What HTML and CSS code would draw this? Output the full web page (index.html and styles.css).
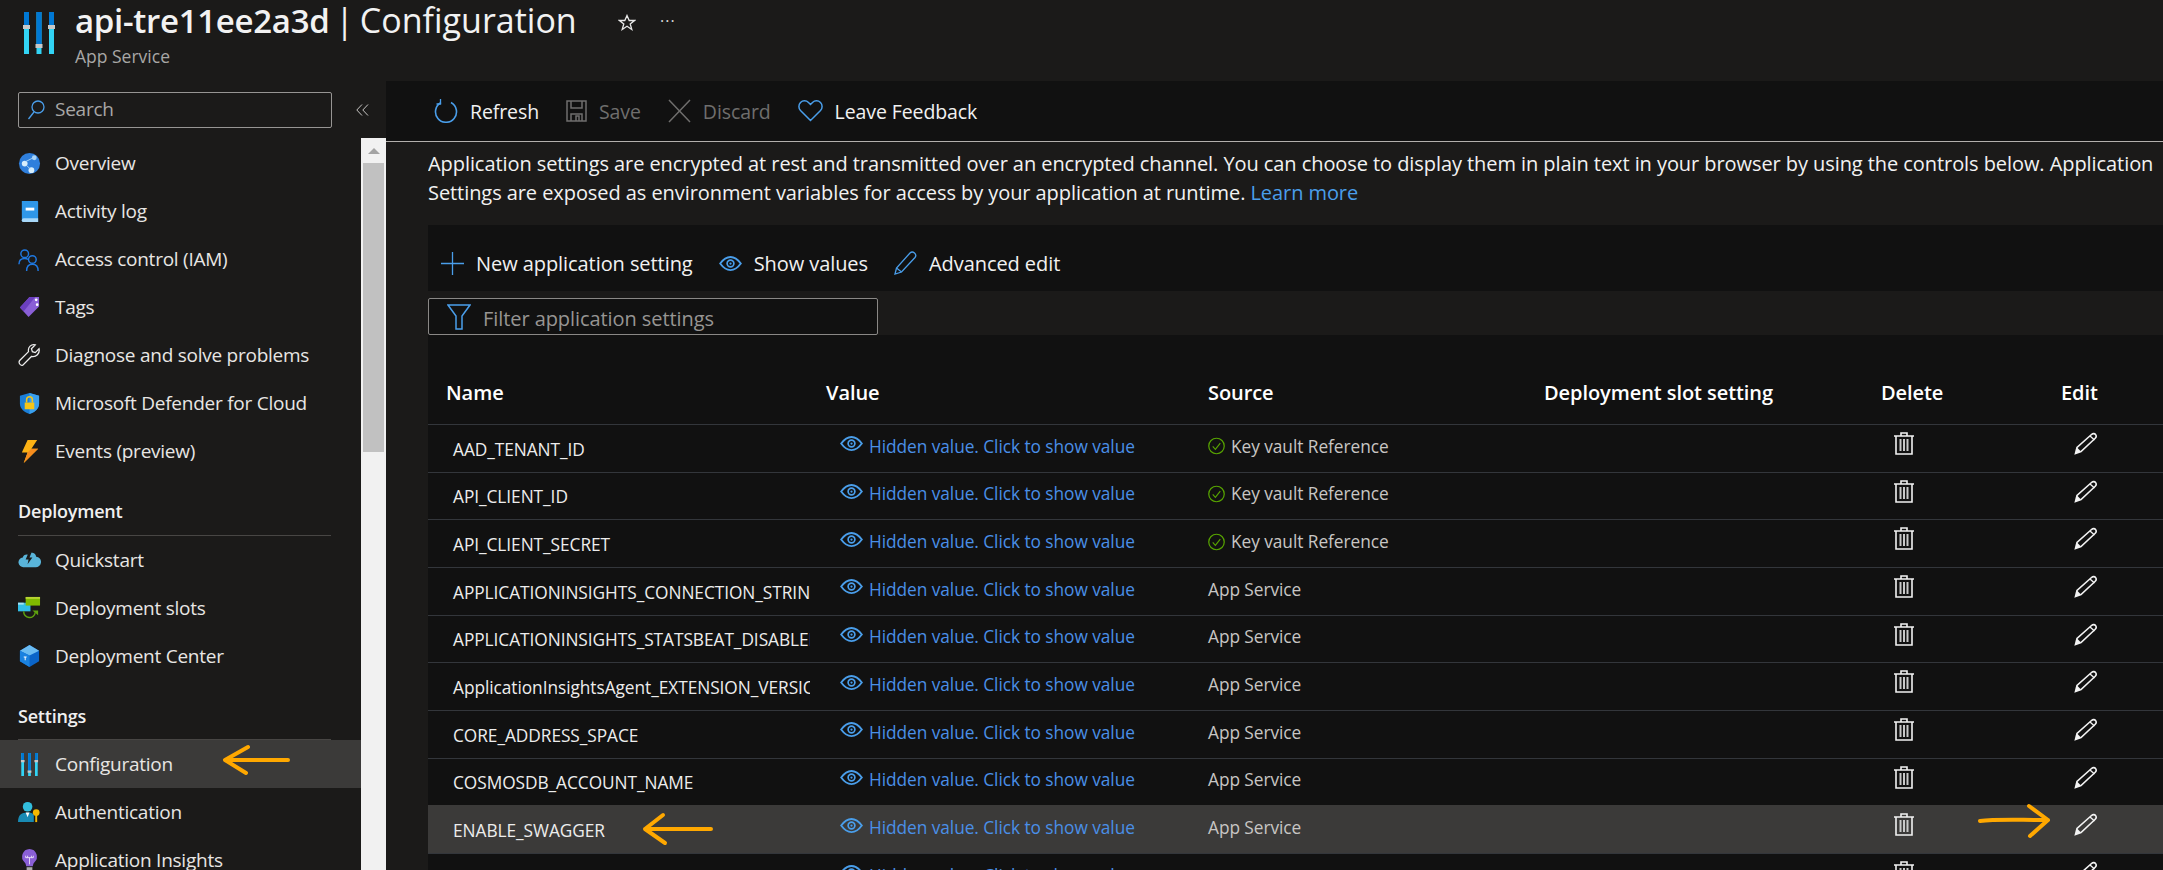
FILE: index.html
```html
<!DOCTYPE html>
<html lang="en">
<head>
<meta charset="utf-8">
<title>api-tre11ee2a3d | Configuration</title>
<link rel="stylesheet" href="styles.css">
</head>
<body>
<svg class="defs" width="0" height="0" aria-hidden="true">
  <symbol id="eye" viewBox="0 0 24 16"><path d="M1 8C5 2.500 8.500 1 12 1s7 1.500 11 7c-4 5.500-7.500 7-11 7S5 13.500 1 8z" fill="none" stroke="currentColor" stroke-width="2"/><circle cx="12" cy="8" r="3.600" fill="none" stroke="currentColor" stroke-width="1.800"/><circle cx="12" cy="8" r="1.200" fill="currentColor"/></symbol>
  <symbol id="check" viewBox="0 0 18 18"><circle cx="9" cy="9" r="8.200" fill="none" stroke="#57a300" stroke-width="1.300"/><path d="M5 9.500l2.800 3L13 6" fill="none" stroke="#57a300" stroke-width="1.200"/></symbol>
  <symbol id="trash" viewBox="0 0 20 23"><path d="M0 4h20M7 4V1h6v3M2 4v18h16V4" fill="none" stroke="#f2f2f2" stroke-width="1.600"/><path d="M6.500 7v12M10 7v12M13.500 7v12" stroke="#c8c8c8" stroke-width="2"/></symbol>
  <symbol id="pencil" viewBox="0 0 24 23"><path d="M1.500 21.500l1.500-6L17.500 2.500c1.500-1.300 3.200-1 4 0 1 1.200.8 2.800-.5 4L7 19.500z" fill="none" stroke="#f2f2f2" stroke-width="1.600"/><path d="M1.500 21.500l1.500-6 4 4z" fill="#f2f2f2"/><path d="M16 4l4.500 4" stroke="#f2f2f2" stroke-width="1.400"/></symbol>
  <symbol id="sliders" viewBox="0 0 32 42"><path d="M1 0h5v42H1zM13.500 0h5v42h-5zM26 0h5v42h-5z" fill="#32d4f5"/><path d="M1 0h5v14H1zM13.500 0h5v33h-5zM26 0h5v14h-5z" fill="#0078d4"/><path d="M0 13h7v4H0zM12.500 32h7v4h-7zM25 13h7v4h-7z" fill="#c8c8c8"/></symbol>
</svg>

<header class="top">
  <svg class="top-icon" width="32" height="42"><use href="#sliders"/></svg>
  <div class="top-titles">
    <h1 class="title"><b>api-tre11ee2a3d</b> | Configuration</h1>
    <div class="subtitle">App Service</div>
  </div>
  <svg class="star" width="18" height="18" viewBox="0 0 18 18"><path d="M9 1.500l2.200 5h5.300l-4.300 3.400 1.600 5.600L9 12.300l-4.800 3.200 1.600-5.600L1.500 6.500h5.300z" fill="none" stroke="#e8e8e8" stroke-width="1.300"/></svg>
  <span class="dots">···</span>
</header>

<div class="shell">
  <aside class="side">
    <div class="side-top">
      <div class="search">
        <svg width="18" height="22" viewBox="0 0 18 22"><circle cx="11" cy="8" r="6" fill="none" stroke="#4a9eea" stroke-width="1.300"/><path d="M7 13L1.500 20" stroke="#4a9eea" stroke-width="1.300"/></svg>
        <span>Search</span>
      </div>
      <svg class="collapse" width="13" height="12" viewBox="0 0 13 12"><path d="M6 0.500L0.800 6L6 11.500M12 0.500L6.800 6L12 11.500" fill="none" stroke="#c8c6c4" stroke-width="1"/></svg>
    </div>
    <div class="nav-wrap">
      <nav class="nav">
        <a class="item"><svg class="ico" viewBox="0 0 24 24"><circle cx="12" cy="12" r="11" fill="#2f7fdc"/><circle cx="7" cy="12" r="3" fill="#d8eefc"/><circle cx="17" cy="6" r="2.500" fill="#a9d4f7"/><circle cx="14" cy="19" r="3" fill="#d8eefc"/><path d="M8 10l8-4M9 14l4 4" stroke="#a9d4f7"/></svg>Overview</a>
        <a class="item"><svg class="ico" viewBox="0 0 24 24"><path d="M4 1h16a1 1 0 0 1 1 1v21H6a2 2 0 0 1-2-2z" fill="#2f97e8"/><path d="M4 21a2 2 0 0 1 2-2h15v4H6a2 2 0 0 1-2-2z" fill="#a8d8f8"/><path d="M8 8h9v3H8z" fill="#fff"/></svg>Activity log</a>
        <a class="item"><svg class="ico" viewBox="0 0 24 24"><circle cx="7" cy="6" r="4" fill="none" stroke="#1f78e0" stroke-width="1.500"/><path d="M1 17c0-4 2-6 6-6 1.500 0 3 .5 3.500 1" fill="none" stroke="#1f78e0" stroke-width="1.500"/><circle cx="15" cy="12" r="4" fill="none" stroke="#1f78e0" stroke-width="1.500"/><path d="M9 24c0-4 2-7 6-7s6 3 6 7" fill="none" stroke="#1f78e0" stroke-width="1.500"/></svg>Access control (IAM)</a>
        <a class="item"><svg class="ico" viewBox="0 0 24 24"><path d="M2 12L12 1h10v10L11 22z" fill="#8a5fd6"/><path d="M2 12L12 1h6L6 16z" fill="#6b3fbf"/><circle cx="19" cy="4" r="1.400" fill="#fff"/><circle cx="20" cy="9" r="1.400" fill="#fff"/></svg>Tags</a>
        <a class="item"><svg class="ico" viewBox="0 0 24 24"><path d="M22 5l-4 4-3-1-1-3 4-4c-4-1-8 2-7 7L2 17c-2 2 0 6 3 5l9-9c5 1 9-3 8-8z" fill="none" stroke="#efefef" stroke-width="1.300"/></svg>Diagnose and solve problems</a>
        <a class="item"><svg class="ico" viewBox="0 0 24 24"><path d="M12 1l10 3v8c0 6-5 9-10 11C7 21 2 18 2 12V4z" fill="#1b7fd8"/><path d="M12 1l10 3v8c0 6-5 9-10 11z" fill="#3aa0ee"/><path d="M7 11h10v7H7z" fill="#f5c518"/><path d="M9 11V8a3 3 0 0 1 6 0v3" fill="none" stroke="#f5c518" stroke-width="1.600"/></svg>Microsoft Defender for Cloud</a>
        <a class="item"><svg class="ico" viewBox="0 0 24 24"><path d="M10 0h10l-6 9h7L6 24l4-11H4z" fill="#fcb214"/><path d="M14 9h7L6 24l4-11z" fill="#f78d1e"/></svg>Events (preview)</a>
        <div class="sec">Deployment</div>
        <a class="item"><svg class="ico" viewBox="0 0 24 24"><path d="M6 20a5 5 0 0 1-1-10 4 4 0 0 1 5-3 5 5 0 0 1 9 2 5.500 5.500 0 0 1-1 11z" fill="#59b4d9"/><path d="M11 5l-3 7h3l-1 5 5-7h-3l2-5z" fill="#1b1a19"/></svg>Quickstart</a>
        <a class="item"><svg class="ico" viewBox="0 0 24 24"><path d="M0 7h13v9H0z" fill="#32bfe8"/><path d="M0 7h6v2H0z" fill="#a5e3f5"/><path d="M8 1h15v9H8z" fill="#7fba00"/><path d="M8 1h15v2H8z" fill="#b8d432"/><path d="M6 16a6 6 0 0 0 12 1" fill="none" stroke="#5ea20f" stroke-width="1.500"/><path d="M15 15h6v5z" fill="#5ea20f"/></svg>Deployment slots</a>
        <a class="item"><svg class="ico" viewBox="0 0 24 24"><path d="M12 1l10 6v11l-10 6L2 18V7z" fill="#0a64c8"/><path d="M12 1l10 6-10 5L2 7z" fill="#6bbcf2"/><path d="M2 7l10 5v12L2 18z" fill="#1a82e0"/><path d="M6 13h3v1H8v3H7v-3H6z" fill="#fff"/></svg>Deployment Center</a>
        <div class="sec">Settings</div>
        <a class="item is-active"><svg class="ico" viewBox="0 0 32 42"><use href="#sliders"/></svg>Configuration</a>
        <a class="item"><svg class="ico" viewBox="0 0 24 24"><circle cx="10" cy="6" r="5" fill="#32bedd"/><path d="M0 22c0-7 3-10 10-10 3 0 5 .5 6.500 2v8z" fill="#198ab3"/><path d="M8 12h4l-2 5z" fill="#fff"/><circle cx="19" cy="12" r="3.500" fill="#f5b800"/><path d="M18 14h2v8h-2z" fill="#f5b800"/></svg>Authentication</a>
        <a class="item"><svg class="ico" viewBox="0 0 24 24"><path d="M12 0a8 8 0 0 1 5 14c-1 1-1.500 3-1.500 4h-7c0-1-.5-3-1.500-4a8 8 0 0 1 5-14z" fill="#8a5fd6"/><path d="M9 19h6v4H9z" fill="#aaa"/><path d="M8 7v2h2V7M14 7v2h2V7M9 9h6M12 9v7" fill="none" stroke="#e6d9f7"/></svg>Application Insights</a>
      </nav>
      <div class="scrollbar">
        <div class="scroll-up"></div>
        <div class="scroll-thumb"></div>
      </div>
    </div>
  </aside>

  <main class="main">
    <div class="cmdbar">
      <span class="cmd"><svg width="24" height="24" viewBox="0 0 24 24"><path d="M7 3.500a10.500 10.500 0 1 0 10 0" fill="none" stroke="#4a9eea" stroke-width="1.600"/><path d="M6.500 0v5h-4" fill="none" stroke="#4a9eea" stroke-width="1.300"/></svg>Refresh</span>
      <span class="cmd is-off"><svg width="21" height="24" viewBox="0 0 21 24"><path d="M1 2h19v20H1zM5 2v7h11V2M5 22v-7h11v7M10 17h3v5h-3z" fill="none" stroke="#6f6e6d" stroke-width="1.500"/></svg>Save</span>
      <span class="cmd is-off"><svg width="23" height="24" viewBox="0 0 23 24"><path d="M1 1l21 22M22 1L1 23" stroke="#6f6e6d" stroke-width="1.500"/></svg>Discard</span>
      <span class="cmd"><svg width="25" height="22" viewBox="0 0 25 22"><path d="M12.500 20.500L2.500 10.500a5.800 5.800 0 0 1 0-8 5.600 5.600 0 0 1 8 0l2 2 2-2a5.600 5.600 0 0 1 8 0 5.800 5.800 0 0 1 0 8z" fill="none" stroke="#4a9eea" stroke-width="1.500"/></svg>Leave Feedback</span>
    </div>
    <div class="content">
      <p class="intro">Application settings are encrypted at rest and transmitted over an encrypted channel. You can choose to display them in plain text in your browser by using the controls below. Application<br>Settings are exposed as environment variables for access by your application at runtime. <a class="link">Learn more</a></p>
      <div class="actions">
        <span class="act"><svg width="23" height="23" viewBox="0 0 23 23"><path d="M11.500 0v23M0 11.500h23" stroke="#4a9eea" stroke-width="1.300"/></svg>New application setting</span>
        <span class="act"><svg class="eye" width="23" height="15"><use href="#eye"/></svg>Show values</span>
        <span class="act"><svg width="23" height="24" viewBox="0 0 23 24"><path d="M1 23l1.500-6L16 2c1.300-1.300 3-1.300 4.500 0s1.600 3 .5 4.500L7.500 21z" fill="none" stroke="#4a9eea" stroke-width="1.300"/><path d="M2.500 17l5 4" stroke="#4a9eea" stroke-width="1.300"/></svg>Advanced edit</span>
      </div>
      <div class="filter-row">
        <div class="filter">
          <svg width="24" height="26" viewBox="0 0 24 26"><path d="M1 1h22l-8 11v13H9V12z" fill="none" stroke="#4a9eea" stroke-width="1.500"/></svg>
          <span>Filter application settings</span>
        </div>
      </div>
      <section class="table">
        <div class="thead">
          <div class="th th-name">Name</div><div class="th">Value</div><div class="th">Source</div><div class="th">Deployment slot setting</div><div class="th">Delete</div><div class="th">Edit</div>
        </div>
        <div class="row">
          <div class="name">AAD_TENANT_ID</div>
          <div class="val"><svg class="eye" width="23" height="15"><use href="#eye"/></svg>Hidden value. Click to show value</div>
          <div class="src"><svg class="ok" width="17" height="18"><use href="#check"/></svg>Key vault Reference</div><div></div>
          <div class="btn"><svg width="20" height="23"><use href="#trash"/></svg></div><div class="btn"><svg width="24" height="23"><use href="#pencil"/></svg></div>
        </div>
        <div class="row">
          <div class="name">API_CLIENT_ID</div>
          <div class="val"><svg class="eye" width="23" height="15"><use href="#eye"/></svg>Hidden value. Click to show value</div>
          <div class="src"><svg class="ok" width="17" height="18"><use href="#check"/></svg>Key vault Reference</div><div></div>
          <div class="btn"><svg width="20" height="23"><use href="#trash"/></svg></div><div class="btn"><svg width="24" height="23"><use href="#pencil"/></svg></div>
        </div>
        <div class="row">
          <div class="name">API_CLIENT_SECRET</div>
          <div class="val"><svg class="eye" width="23" height="15"><use href="#eye"/></svg>Hidden value. Click to show value</div>
          <div class="src"><svg class="ok" width="17" height="18"><use href="#check"/></svg>Key vault Reference</div><div></div>
          <div class="btn"><svg width="20" height="23"><use href="#trash"/></svg></div><div class="btn"><svg width="24" height="23"><use href="#pencil"/></svg></div>
        </div>
        <div class="row">
          <div class="name">APPLICATIONINSIGHTS_CONNECTION_STRING</div>
          <div class="val"><svg class="eye" width="23" height="15"><use href="#eye"/></svg>Hidden value. Click to show value</div>
          <div class="src">App Service</div><div></div>
          <div class="btn"><svg width="20" height="23"><use href="#trash"/></svg></div><div class="btn"><svg width="24" height="23"><use href="#pencil"/></svg></div>
        </div>
        <div class="row">
          <div class="name">APPLICATIONINSIGHTS_STATSBEAT_DISABLED</div>
          <div class="val"><svg class="eye" width="23" height="15"><use href="#eye"/></svg>Hidden value. Click to show value</div>
          <div class="src">App Service</div><div></div>
          <div class="btn"><svg width="20" height="23"><use href="#trash"/></svg></div><div class="btn"><svg width="24" height="23"><use href="#pencil"/></svg></div>
        </div>
        <div class="row">
          <div class="name">ApplicationInsightsAgent_EXTENSION_VERSION</div>
          <div class="val"><svg class="eye" width="23" height="15"><use href="#eye"/></svg>Hidden value. Click to show value</div>
          <div class="src">App Service</div><div></div>
          <div class="btn"><svg width="20" height="23"><use href="#trash"/></svg></div><div class="btn"><svg width="24" height="23"><use href="#pencil"/></svg></div>
        </div>
        <div class="row">
          <div class="name">CORE_ADDRESS_SPACE</div>
          <div class="val"><svg class="eye" width="23" height="15"><use href="#eye"/></svg>Hidden value. Click to show value</div>
          <div class="src">App Service</div><div></div>
          <div class="btn"><svg width="20" height="23"><use href="#trash"/></svg></div><div class="btn"><svg width="24" height="23"><use href="#pencil"/></svg></div>
        </div>
        <div class="row">
          <div class="name">COSMOSDB_ACCOUNT_NAME</div>
          <div class="val"><svg class="eye" width="23" height="15"><use href="#eye"/></svg>Hidden value. Click to show value</div>
          <div class="src">App Service</div><div></div>
          <div class="btn"><svg width="20" height="23"><use href="#trash"/></svg></div><div class="btn"><svg width="24" height="23"><use href="#pencil"/></svg></div>
        </div>
        <div class="row is-hover">
          <div class="name">ENABLE_SWAGGER</div>
          <div class="val"><svg class="eye" width="23" height="15"><use href="#eye"/></svg>Hidden value. Click to show value</div>
          <div class="src">App Service</div><div></div>
          <div class="btn"><svg width="20" height="23"><use href="#trash"/></svg></div><div class="btn"><svg width="24" height="23"><use href="#pencil"/></svg></div>
        </div>
        <div class="row">
          <div class="name"></div>
          <div class="val"><svg class="eye" width="23" height="15"><use href="#eye"/></svg>Hidden value. Click to show value</div>
          <div class="src"></div><div></div>
          <div class="btn"><svg width="20" height="23"><use href="#trash"/></svg></div><div class="btn"><svg width="24" height="23"><use href="#pencil"/></svg></div>
        </div>
      </section>
    </div>
  </main>
</div>

<svg class="arrows" width="2163" height="870" viewBox="0 0 2163 870" aria-hidden="true">
  <g fill="none" stroke="#ffa800" stroke-width="4" stroke-linecap="round" stroke-linejoin="round">
    <path d="M288 760H225M248 747L225 760L246 773"/>
    <path d="M711 829H645M663 815L645 829L665 843"/>
    <path d="M1980 821c15-2 35-1 68-1M2029 806L2048 820L2030 836"/>
  </g>
</svg>
</body>
</html>
```

FILE: styles.css
```css
* { box-sizing: border-box; }
html, body { margin: 0; height: 100%; }
body {
  width: 2163px;
  height: 870px;
  overflow: hidden;
  position: relative;
  background: #1b1a19;
  color: #f2f2f2;
  font-family: "Open Sans", "Liberation Sans", sans-serif;
  font-size: 20px;
  letter-spacing: -0.07px;
}
.defs { display: block; height: 0; }

.top { height: 81px; display: flex; align-items: flex-start; padding: 12px 0 0 23px; }
.top-icon { flex: none; }
.top-titles { margin: -15px 0 0 20px; width: 519px; }
.title { margin: 0; font-size: 34px; font-weight: 400; line-height: 46px; white-space: nowrap; letter-spacing: 0; word-spacing: -3px; }
.title b { font-weight: 600; font-size: 33px; letter-spacing: -0.3px; }
.subtitle { font-size: 17.500px; line-height: 22px; color: #a8a7a6; margin-top: 1px; letter-spacing: 0; }
.star { margin: 2px 0 0 24px; flex: none; }
.dots { margin: -1px 0 0 24px; font-size: 16px; line-height: 20px; color: #d8d8d8; letter-spacing: 1px; }

.shell { display: flex; height: 789px; }
.side { width: 386px; flex: none; font-size: 19px; letter-spacing: -0.25px; }
.side-top { height: 57px; display: flex; padding: 11px 0 0 18px; }
.search { width: 314px; height: 36px; border: 1px solid #979593; border-radius: 2px; display: flex; align-items: center; gap: 10px; padding: 0 0 2px 8px; color: #a8a7a6; }
.search svg { margin-top: 2px; }
.collapse { margin: 12px 0 0 24px; flex: none; }

.nav-wrap { display: flex; height: 732px; }
.nav { width: 361px; flex: none; padding-top: 1px; }
.item { height: 48px; display: flex; align-items: center; gap: 14px; padding-left: 18px; color: #e8e6e4; white-space: nowrap; }
.item.is-active { background: #3b3a39; }
.ico { width: 23px; height: 23px; flex: none; }
.sec { height: 60.500px; margin: 0 30px 0 18px; padding-top: 24px; line-height: 24px; font-size: 18px; font-weight: 600; border-bottom: 1px solid #484644; color: #f0f0f0; letter-spacing: -0.2px; }

.scrollbar { width: 25px; flex: none; background: #f1f1f1; padding: 0 2px; }
.scroll-up { height: 25px; display: flex; align-items: center; justify-content: center; }
.scroll-up::before { content: ""; border: 6px solid transparent; border-top: 0; border-bottom: 6px solid #a3a3a3; }
.scroll-thumb { height: 289px; background: #c1c1c1; }

.main { flex: 1; min-width: 0; display: flex; flex-direction: column; }
.cmdbar { height: 61px; flex: none; background: #111; border-bottom: 1px solid #b3b0ad; display: flex; align-items: center; padding-left: 48px; gap: 27px; font-size: 19.500px; letter-spacing: -0.1px; }
.cmd { display: inline-flex; align-items: center; gap: 12px; color: #f2f2f2; white-space: nowrap; line-height: 26px; padding-top: 1px; }
.cmd svg { margin-top: -1px; }
.cmd.is-off { color: #6f6e6d; }

.content { flex: 1; min-height: 0; padding: 7px 0 0 42px; }
.intro { margin: 0; line-height: 29px; white-space: nowrap; color: #f2f2f2; overflow: hidden; }
.link { color: #4a9eea; }

.actions { margin-top: 18px; height: 66px; background: #111; display: flex; align-items: center; padding: 10px 0 0 13px; gap: 26px; }
.act { display: inline-flex; align-items: center; gap: 12px; white-space: nowrap; }
.eye { color: #4a9eea; flex: none; }

.filter-row { padding-top: 7px; }
.filter { width: 450px; height: 37px; background: #111; border: 1px solid #8a8886; border-radius: 2px; display: flex; align-items: center; gap: 12px; padding-left: 18px; color: #979593; }
.filter span { padding-top: 3px; }

.table { background: #111; }
.thead, .row { display: grid; grid-template-columns: 398px 382px 336px 337px 180px 102px; }
.thead { height: 89px; padding-top: 42px; }
.th { line-height: 32px; font-weight: 600; color: #fff; white-space: nowrap; }
.th-name { padding-left: 18px; }
.row { height: 47.670px; border-top: 1px solid #33363b; align-items: center; font-size: 17.300px; letter-spacing: -0.05px; }
.row.is-hover { background: #3b3a39; border-top-color: #3b3a39; }
.name { margin-right: 16px; padding: 2px 0 0 25px; overflow: hidden; white-space: nowrap; color: #ededed; }
.val { padding: 0 0 4px 14px; display: flex; align-items: center; gap: 6px; color: #4a8fe7; white-space: nowrap; }
.val .eye { margin-bottom: 5px; }
.src { padding-bottom: 4px; display: flex; align-items: center; gap: 6px; color: #c8c6c4; white-space: nowrap; }
.btn { align-self: start; padding: 7px 0 0 13px; height: 38px; }
.btn svg { display: block; }

.arrows { position: absolute; left: 0; top: 0; pointer-events: none; }
```
